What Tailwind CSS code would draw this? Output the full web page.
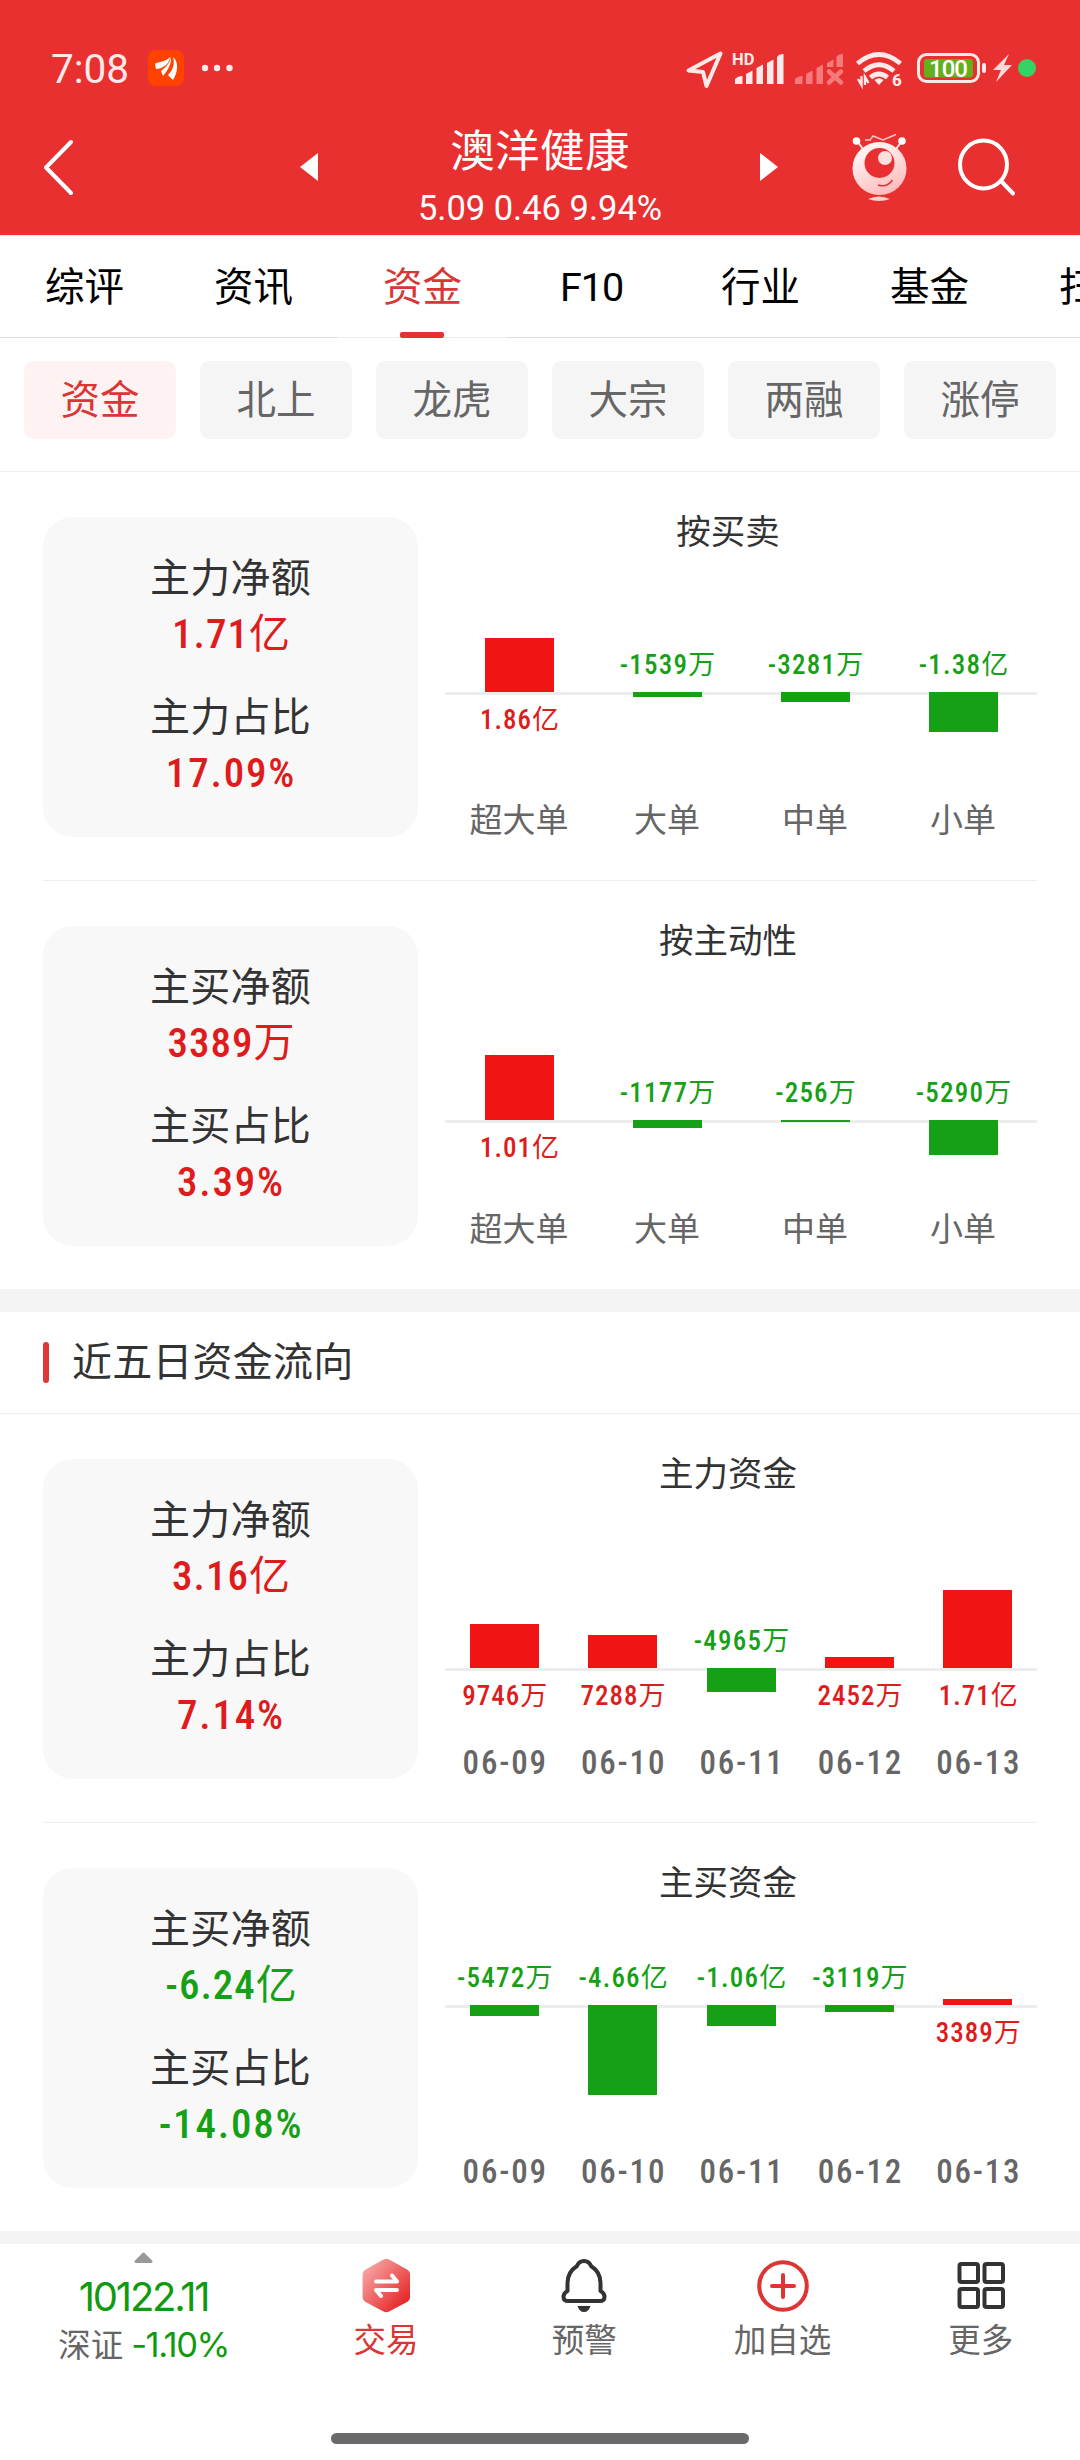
<!DOCTYPE html>
<html lang="zh-CN">

<head>
    <meta charset="UTF-8">
    <meta name="viewport" content="width=device-width, initial-scale=1.0">
    <title>澳洋健康 - 资金</title>
    <script src="https://cdn.jsdelivr.net/npm/@tailwindcss/browser@4"></script>
</head>

<body class="bg-white">
    <div class="w-[1080px] h-[2460px] flex flex-col overflow-hidden bg-white font-[Roboto,'Noto_Sans_CJK_SC',sans-serif]">

        <!-- header -->
        <header class="h-[236px] shrink-0 bg-[#e93030] border-b border-[#ffdede] text-white">
            <div class="h-[118px] pt-[18px] pl-[51px] pr-[44px] flex items-center justify-between">
                <div class="flex items-center">
                    <span class="text-[40.500px] leading-[42px] w-[97px] pt-[1px] text-[#ffe9e9]">7:08</span>
                    <svg class="w-9 h-9" viewBox="0 0 36 36">
                        <rect width="36" height="36" rx="8" fill="#ff4200" />
                        <path d="M7 14C8 12 18 12 22 7C22 13 15 19 8 19Z M23 7C24 14 19 21 15 26L13 21C18 17 22 13 23 7Z M25 7C31 12 30 22 25 30L20 25C25 20 27 14 25 7Z" fill="#fff" />
                    </svg>
                    <svg class="w-8 h-2 ml-[17px]" viewBox="0 0 32 8" fill="#ffe9e9">
                        <circle cx="4" cy="4" r="3.2" />
                        <circle cx="16" cy="4" r="3.2" />
                        <circle cx="28.500" cy="4" r="3.2" />
                    </svg>
                </div>
                <svg class="w-[352px] h-10 overflow-visible" viewBox="684 48 352 40" fill="#ffe9e9">
                    <path d="M688.500 70.500L720.500 53.500L706.500 86L703 72Z" fill="none" stroke="#ffe9e9" stroke-width="4" stroke-linejoin="round" />
                    <text x="732" y="64.500" font-size="16.500" font-weight="700">HD</text>
                    <path d="M735 84V79Q738 76 742.500 76V84Z M746 84V74L752.500 70.500V84Z M756.500 84V68L763 64.500V84Z M767 84V63L773.500 59.500V84Z M777 84V57Q779 54 783.500 54V84Z" />
                    <g fill="#f67a7a" stroke="none">
                        <path d="M795 84V79Q798 76 802.500 76V84Z M806 84V74L812.500 70.500V84Z M816.500 84V68L823 64.500V84Z M827 67V63L833.500 59.500V67Z M836.500 67V57Q838 54 843 54V67Z" />
                        <path d="M829 71.500L841 82.500M841 71.500L829 82.500" stroke="#f67a7a" stroke-width="4.500" stroke-linecap="round" />
                    </g>
                    <path d="M857.500 63.500Q879 45.500 900.500 63.500M864 71Q879 58.500 894 71M870.500 77.500Q879 70.500 887.500 77.500" fill="none" stroke="#ffe9e9" stroke-width="4.800" />
                    <path d="M874.500 80Q879 76.500 883.500 80L879 85Z" />
                    <path d="M858 79L861.500 85V76M865 85V77L868.500 83" fill="none" stroke="#ffe9e9" stroke-width="2.400" />
                    <text x="892" y="86" font-size="17" font-weight="800">6</text>
                    <rect x="918.500" y="54.500" width="60" height="27" rx="8" fill="none" stroke="#ffe9e9" stroke-width="3" />
                    <rect x="924" y="59" width="49" height="18.500" rx="3" fill="#64b01c" />
                    <text x="948.500" y="77" font-size="24" font-weight="500" text-anchor="middle" fill="#fff" textLength="39">100</text>
                    <rect x="982" y="63" width="4" height="10" rx="2" />
                    <path d="M1009 54L993 70H1001L996 82L1012 65H1004Z" fill="#ffd9d9" />
                    <circle cx="1027" cy="68" r="9" fill="#33d366" />
                </svg>
            </div>
            <div class="h-[117px] pl-[42px] pr-[63px] flex items-start justify-between">
                <svg class="w-8 h-[60px] mt-[20px]" viewBox="0 0 32 60" fill="none" stroke="#fff" stroke-width="4" stroke-linecap="round" stroke-linejoin="round">
                    <path d="M29 4L4 29.500L29 55" />
                </svg>
                <div class="w-[478px] ml-[153px] flex items-start justify-between">
                    <svg class="w-[18px] h-7 mt-[35px]" viewBox="0 0 18 28">
                        <path d="M18 0V28L0 14Z" fill="#fff" />
                    </svg>
                    <div class="flex flex-col items-center pt-[7px] pl-[2px]">
                        <h1 class="text-[44.500px] leading-[54px] tracking-[0.400px]">澳洋健康</h1>
                        <p class="text-[34.500px] leading-[34px] mt-[12px]">5.09 0.46 9.94%</p>
                    </div>
                    <svg class="w-[18px] h-7 mt-[35px]" viewBox="0 0 18 28">
                        <path d="M0 0V28L18 14Z" fill="#fff" />
                    </svg>
                </div>
                <div class="flex items-start gap-[48px]">
                    <svg class="w-[58px] h-[70px] mt-[15px]" viewBox="851 133 58 70">
                        <defs>
                            <linearGradient id="bot" x1="0.200" y1="0" x2="0.700" y2="1">
                                <stop offset="0.200" stop-color="#fff0f0" />
                                <stop offset="1" stop-color="#ffb9b9" />
                            </linearGradient>
                        </defs>
                        <path d="M857 141L863 149M902 141L896 149" stroke="#ffe9e9" stroke-width="2" />
                        <circle cx="856.500" cy="141" r="3.800" fill="#fff" />
                        <circle cx="902" cy="141" r="3.800" fill="#fff" />
                        <path d="M865 140H870L873 136L883 140L896 134.500" fill="none" stroke="#ffc4c4" stroke-width="1.500" />
                        <ellipse cx="879.500" cy="168.500" rx="27" ry="26.500" fill="url(#bot)" />
                        <circle cx="879.500" cy="163" r="15" fill="#e93030" />
                        <circle cx="885" cy="158" r="7" fill="#ffdede" />
                        <path d="M878 185Q887 188 892.500 180" fill="none" stroke="#d93636" stroke-width="1.500" />
                        <path d="M868 199Q879 194 890 199Q879 203 868 199Z" fill="#ffd0d0" />
                    </svg>
                    <svg class="w-[60px] h-[60px] mt-[20px]" viewBox="957 138 60 60" fill="none" stroke="#fff" stroke-width="4" stroke-linecap="round">
                        <ellipse cx="983.500" cy="164.500" rx="23.500" ry="24" />
                        <path d="M1001.500 181.500L1013 193.500" />
                    </svg>
                </div>
            </div>
        </header>

        <!-- main tabs -->
        <nav class="h-[102px] shrink-0 flex text-[39.500px] leading-[103px] text-black text-center">
            <a class="w-[169px] shrink-0 border-b border-[#dcdcdc]">综评</a>
            <a class="w-[169px] shrink-0 border-b border-[#dcdcdc]">资讯</a>
            <a class="w-[169px] shrink-0 border-b border-[#eeeeee] text-[#d93636] relative">资金
                <span class="absolute left-[62px] bottom-[-1px] w-[44px] h-[6px] rounded-[2px] bg-[#e33232]"></span>
            </a>
            <a class="w-[169px] shrink-0 border-b border-[#dcdcdc] tracking-[-1px]">F10</a>
            <a class="w-[169px] shrink-0 border-b border-[#dcdcdc]">行业</a>
            <a class="w-[169px] shrink-0 border-b border-[#dcdcdc]">基金</a>
            <a class="w-[169px] shrink-0 border-b border-[#dcdcdc]">扫雷</a>
        </nav>

        <!-- sub tabs -->
        <div class="h-[134px] shrink-0 pt-[23px] pl-6 flex gap-6 border-b border-[#eeeeee] text-[39.500px] leading-[79px] text-[#666666] text-center">
            <a class="w-[152px] h-[78px] rounded-[9px] bg-[#fff2f2] text-[#d93636]">资金</a>
            <a class="w-[152px] h-[78px] rounded-[9px] bg-[#f5f5f5]">北上</a>
            <a class="w-[152px] h-[78px] rounded-[9px] bg-[#f5f5f5]">龙虎</a>
            <a class="w-[152px] h-[78px] rounded-[9px] bg-[#f5f5f5]">大宗</a>
            <a class="w-[152px] h-[78px] rounded-[9px] bg-[#f5f5f5]">两融</a>
            <a class="w-[152px] h-[78px] rounded-[9px] bg-[#f5f5f5]">涨停</a>
        </div>

        <section id="today" class="shrink-0 px-[43px] divide-y divide-[#eeeeee]"></section>

        <div class="h-[23px] shrink-0 bg-[#f4f4f4]"></div>

        <div class="h-[102px] shrink-0 pl-[43px] flex items-center border-b border-[#ececec]">
            <span class="w-[6px] h-[41px] rounded-[3px] bg-[#e03636]"></span>
            <h2 class="ml-[23px] text-[40px] leading-[48px] tracking-[0.200px] text-[#333333]">近五日资金流向</h2>
        </div>

        <section id="fiveDays" class="shrink-0 px-[43px] divide-y divide-[#eeeeee]"></section>

        <div class="h-[13px] shrink-0 bg-[#f4f4f4]"></div>

        <!-- bottom bar -->
        <footer class="h-[140px] shrink-0 flex text-[32.500px] leading-[36px] text-[#666666]">
            <div class="w-[287px] pt-[8px] flex flex-col items-center">
                <svg class="w-[19px] h-[11px]" viewBox="0 0 19 11">
                    <path d="M2 9.500L9.500 2L17 9.500Z" fill="#999" stroke="#999" stroke-width="3" stroke-linejoin="round" />
                </svg>
                <span class="mt-[14px] font-[Inter] text-[40px] leading-[40px] tracking-[-2.200px] text-[#0f9a0f]">10122.11</span>
                <span class="mt-[10px]">深证 <span class="font-[Inter] text-[34.500px] tracking-[-1.500px] text-[#0f9a0f]">-1.10%</span></span>
            </div>
            <div class="grow flex">
                <a class="w-1/4 pt-[14px] flex flex-col items-center text-[#d93636]">
                    <svg class="w-[54px] h-[56px]" viewBox="359 2258 54 56">
                        <defs>
                            <linearGradient id="hex" x1="0.100" y1="0.100" x2="0.850" y2="0.850">
                                <stop offset="0" stop-color="#f8a6a6" />
                                <stop offset="1" stop-color="#e62a2a" />
                            </linearGradient>
                        </defs>
                        <path d="M383 2259.700Q386.300 2258 389.600 2259.700L407 2269.500Q410 2271.200 410 2274.500V2297Q410 2300.300 407 2302L389.600 2311.300Q386.300 2313 383 2311.300L365.600 2302Q362.600 2300.300 362.600 2297V2274.500Q362.600 2271.200 365.600 2269.500Z" fill="url(#hex)" />
                        <path d="M376 2281.500H397L392 2275.500M397 2290H376L381 2296" fill="none" stroke="#fff" stroke-width="4" stroke-linecap="round" stroke-linejoin="round" />
                    </svg>
                    <span class="mt-[9px]">交易</span>
                </a>
                <a class="w-1/4 pt-[14px] flex flex-col items-center">
                    <svg class="w-[54px] h-[56px]" viewBox="557.500 2258 54 56">
                        <path d="M577.500 2266Q579.500 2261 584.500 2261Q589.500 2261 591.500 2266Q601 2272 601 2283V2291Q605 2293 605 2297Q605 2301 600 2301H569Q564 2301 564 2297Q564 2293 568 2291V2283Q568 2272 577.500 2266Z" fill="none" stroke="#333" stroke-width="4" stroke-linejoin="round" />
                        <path d="M578 2306H591Q589 2312 584.500 2312Q580 2312 578 2306Z" fill="#333" />
                    </svg>
                    <span class="mt-[9px]">预警</span>
                </a>
                <a class="w-1/4 pt-[14px] flex flex-col items-center">
                    <svg class="w-[54px] h-[56px]" viewBox="756 2258 54 56" fill="none" stroke="#dd3434" stroke-width="4" stroke-linecap="round">
                        <ellipse cx="783" cy="2286" rx="23.800" ry="23.800" />
                        <path d="M772 2286H794M783 2275V2297" />
                    </svg>
                    <span class="mt-[9px]">加自选</span>
                </a>
                <a class="w-1/4 pt-[14px] flex flex-col items-center">
                    <svg class="w-[54px] h-[56px]" viewBox="953.500 2258 54 56" fill="none" stroke="#333" stroke-width="4">
                        <rect x="959" y="2264" width="18.500" height="18" rx="2" />
                        <rect x="984" y="2264" width="18.500" height="18" rx="2" />
                        <rect x="959" y="2289" width="18.500" height="18" rx="2" />
                        <rect x="984" y="2289" width="18.500" height="18" rx="2" />
                    </svg>
                    <span class="mt-[9px]">更多</span>
                </a>
            </div>
        </footer>
        <div class="mt-[49px] mx-auto shrink-0 w-[418px] h-[11px] rounded-full bg-[#6a6a6a]"></div>
    </div>
</body>

<script>
    // axis: px from the top of the plot, bars: [category, label, height], negative goes down
    const today = [
        {
            stats: [['主力净额', '1.71亿'], ['主力占比', '17.09%']],
            title: '按买卖',
            axis: 144,
            bars: [['超大单', '1.86亿', 54], ['大单', '-1539万', -5], ['中单', '-3281万', -10], ['小单', '-1.38亿', -40]]
        },
        {
            stats: [['主买净额', '3389万'], ['主买占比', '3.39%']],
            title: '按主动性',
            axis: 163,
            bars: [['超大单', '1.01亿', 65], ['大单', '-1177万', -8], ['中单', '-256万', -2], ['小单', '-5290万', -34.5]]
        }
    ]
    const fiveDays = [
        {
            stats: [['主力净额', '3.16亿'], ['主力占比', '7.14%']],
            title: '主力资金',
            axis: 178,
            bars: [['06-09', '9746万', 44.5], ['06-10', '7288万', 33.5], ['06-11', '-4965万', -23.5], ['06-12', '2452万', 11.5], ['06-13', '1.71亿', 78.5]]
        },
        {
            stats: [['主买净额', '-6.24亿'], ['主买占比', '-14.08%']],
            title: '主买资金',
            axis: 106,
            bars: [['06-09', '-5472万', -10.5], ['06-10', '-4.66亿', -90], ['06-11', '-1.06亿', -20.5], ['06-12', '-3119万', -6.5], ['06-13', '3389万', 6.5]]
        }
    ]

    // the unit is lighter than the digits
    const amount = (s) => s.replace(/[万亿]/, '<span class="font-normal tracking-normal">$&</span>')

    const stat = ([name, value]) => `
        <div class="h-[139px] flex flex-col items-center">
            <span class="text-[40px] leading-[48px] tracking-[0.200px] text-[#333333]">${name}</span>
            <span class="mt-[7px] pl-[1px] text-[41px] leading-[48px] font-medium font-stretch-75% ${value.includes('%') ? 'tracking-[1.800px]' : 'tracking-[1px]'} ${value[0] === '-' ? 'text-[#16a016]' : 'text-[#e01b1b]'}">${amount(value)}</span>
        </div>`

    const column = (axis) => ([name, label, h]) => `
        <div class="flex-1 flex flex-col items-center">
            <div class="flex flex-col items-center justify-end" style="height:${axis}px">
                ${h > 0
                    ? `<div class="w-[69px] bg-[#f01414]" style="height:${h}px"></div>`
                    : `<span class="mb-[13px] pl-[1px] text-[27px] leading-[28px] tracking-[1.200px] font-medium font-stretch-75% whitespace-nowrap text-[#16a016]">${amount(label)}</span>`}
            </div>
            <div class="w-full flex flex-col items-center border-t-[3px] border-[#ededed]" style="height:${254 - axis}px">
                ${h > 0
                    ? `<span class="mt-[11px] pl-[1px] text-[27px] leading-[28px] tracking-[1px] font-medium font-stretch-75% whitespace-nowrap text-[#e01b1b]">${amount(label)}</span>`
                    : `<div class="w-[69px] shrink-0 -mt-[3px] bg-[#16a016]" style="height:${-h}px"></div>`}
            </div>
            <span class="text-[33px] leading-[37px] text-[#666666] ${name.includes('-') ? 'pl-[2px] tracking-[1.800px] font-medium font-stretch-75%' : ''}">${name}</span>
        </div>`

    const panel = (p) => `
        <div class="h-[409px] last:h-[408px] flex">
            <div class="w-[375px] h-[320px] mt-[45px] pt-[38px] rounded-[30px] bg-[#f8f8f8]">
                ${p.stats.map(stat).join('')}
            </div>
            <div class="w-[592px] ml-[27px] pt-[44px]">
                <h3 class="pr-[26px] text-[34.500px] leading-[32px] text-center text-[#333333]">${p.title}</h3>
                <div class="flex">${p.bars.map(column(p.axis)).join('')}</div>
            </div>
        </div>`

    document.querySelector('#today').innerHTML = today.map(panel).join('')
    document.querySelector('#fiveDays').innerHTML = fiveDays.map(panel).join('')
</script>

</html>
